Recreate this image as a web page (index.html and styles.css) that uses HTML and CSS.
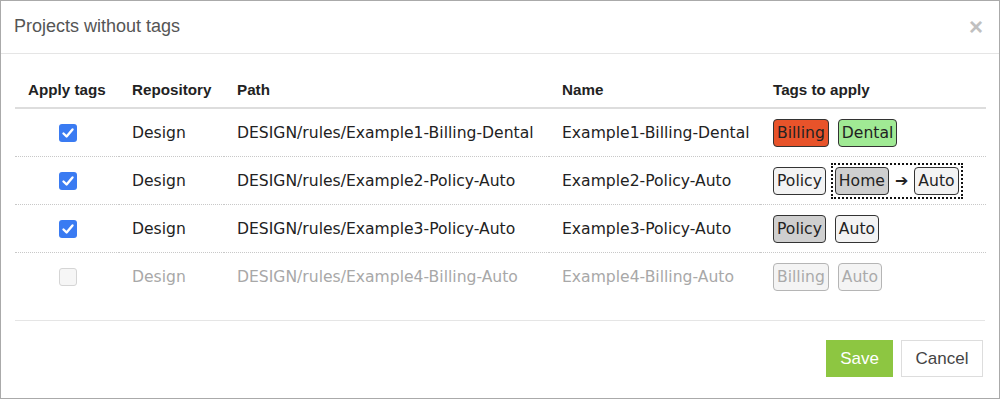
FILE: index.html
```html
<!DOCTYPE html>
<html>
<head>
<meta charset="utf-8">
<link rel="stylesheet" href="styles.css">
</head>
<body>
<div class="dialog">
  <div class="dlg-header">
    <span class="dlg-title">Projects without tags</span>
    <span class="dlg-close">×</span>
  </div>
  <div class="dlg-body">
    <table class="grid">
      <colgroup>
        <col class="c1"><col class="c2"><col class="c3"><col class="c4"><col class="c5">
      </colgroup>
      <thead>
        <tr><th>Apply tags</th><th>Repository</th><th>Path</th><th>Name</th><th>Tags to apply</th></tr>
      </thead>
      <tbody>
        <tr>
          <td class="cbcell"><span class="cb on"><svg viewBox="0 0 18 18" width="18" height="18"><path d="M4.5 9.5 L7.6 12.5 L13.5 5.5" fill="none" stroke="#fff" stroke-width="2.4" stroke-linecap="round" stroke-linejoin="round"/></svg></span></td>
          <td>Design</td>
          <td>DESIGN/rules/Example1-Billing-Dental</td>
          <td>Example1-Billing-Dental</td>
          <td><div class="tags"><span class="tag red">Billing</span><span class="tag green">Dental</span></div></td>
        </tr>
        <tr>
          <td class="cbcell"><span class="cb on"><svg viewBox="0 0 18 18" width="18" height="18"><path d="M4.5 9.5 L7.6 12.5 L13.5 5.5" fill="none" stroke="#fff" stroke-width="2.4" stroke-linecap="round" stroke-linejoin="round"/></svg></span></td>
          <td>Design</td>
          <td>DESIGN/rules/Example2-Policy-Auto</td>
          <td>Example2-Policy-Auto</td>
          <td><div class="tags"><span class="tag">Policy</span><span class="change"><span class="tag grey">Home</span><span class="arrow">➔</span><span class="tag">Auto</span></span></div></td>
        </tr>
        <tr>
          <td class="cbcell"><span class="cb on"><svg viewBox="0 0 18 18" width="18" height="18"><path d="M4.5 9.5 L7.6 12.5 L13.5 5.5" fill="none" stroke="#fff" stroke-width="2.4" stroke-linecap="round" stroke-linejoin="round"/></svg></span></td>
          <td>Design</td>
          <td>DESIGN/rules/Example3-Policy-Auto</td>
          <td>Example3-Policy-Auto</td>
          <td><div class="tags"><span class="tag grey">Policy</span><span class="tag">Auto</span></div></td>
        </tr>
        <tr class="disabled">
          <td class="cbcell"><span class="cb off"></span></td>
          <td>Design</td>
          <td>DESIGN/rules/Example4-Billing-Auto</td>
          <td>Example4-Billing-Auto</td>
          <td><div class="tags"><span class="tag">Billing</span><span class="tag">Auto</span></div></td>
        </tr>
      </tbody>
    </table>
  </div>
  <div class="dlg-footer">
    <button class="btn save">Save</button>
    <button class="btn cancel">Cancel</button>
  </div>
</div>
</body>
</html>
```

FILE: styles.css
```css
html, body {
  margin: 0;
  padding: 0;
  background: #fff;
}
.dialog {
  box-sizing: border-box;
  width: 1000px;
  height: 399px;
  border: 1px solid #aaa;
  display: flex;
  flex-direction: column;
  font-family: "Liberation Sans", Arial, sans-serif;
}
.dlg-header {
  height: 52px;
  border-bottom: 1px solid #e5e5e5;
  display: flex;
  align-items: center;
  justify-content: space-between;
  padding: 0 16px 0 13px;
}
.dlg-title {
  font-size: 18px;
  color: #555;
  padding-bottom: 1px;
}
.dlg-close {
  font-size: 24px;
  color: #c0c0c0;
  font-weight: bold;
  line-height: 1;
}
.dlg-body {
  padding: 17px 14px 0 14px;
  height: 249px;
}
.grid {
  width: 971px;
  border-collapse: collapse;
  table-layout: fixed;
}
.c1 { width: 104px; }
.c2 { width: 105px; }
.c3 { width: 325px; }
.c4 { width: 211px; }
.c5 { width: 226px; }
.grid th {
  text-align: left;
  font-family: "Liberation Sans", Arial, sans-serif;
  font-weight: bold;
  font-size: 15.2px;
  color: #222;
  height: 36px;
  padding: 0 0 0 13px;
  border-bottom: 2px solid #ddd;
  vertical-align: middle;
  white-space: nowrap;
}
.grid td {
  font-family: "DejaVu Sans", Verdana, sans-serif;
  font-size: 15.6px;
  color: #222;
  height: 47px;
  padding: 0 13px;
  border-bottom: 1px dotted #c8c8c8;
  vertical-align: middle;
  white-space: nowrap;
}
.grid tbody tr:last-child td {
  border-bottom: none;
}
.grid td.cbcell {
  text-align: center;
  padding: 0 0 0 1px;
}
.cb {
  display: inline-block;
  width: 18px;
  height: 18px;
  border-radius: 3px;
  box-sizing: border-box;
  vertical-align: middle;
}
.cb svg { display: block; }
.cb.on {
  background: #3a7bf2;
}
.cb.off {
  background: #f6f6f6;
  border: 1px solid #d5d5d5;
}
.tags {
  display: flex;
  align-items: center;
  gap: 9px;
}
.tag {
  display: inline-block;
  box-sizing: border-box;
  height: 28px;
  line-height: 26px;
  padding: 0 3px;
  border: 1px solid #333;
  border-radius: 4px;
  background: #f3f3f3;
  color: #222;
}
.tag.red { background: #e8532a; }
.tag.green { background: #a0ea94; }
.tag.grey { background: #cfcfcf; }
.change {
  display: inline-flex;
  align-items: center;
  gap: 4px;
  padding: 2px 2px;
  border: 2.5px dotted #111;
  margin-left: -4px;
}
.arrow {
  font-size: 16px;
  font-weight: bold;
  color: #222;
  margin: 0 2px;
}
.disabled td {
  color: #a8a8a8;
}
.disabled .tag {
  color: #aaa;
  border-color: #b5b5b5;
  background: #f4f4f4;
}
.dlg-footer {
  margin: 0 14px;
  border-top: 1px solid #e5e5e5;
  display: flex;
  justify-content: flex-end;
  gap: 8px;
  padding: 19px 2px 0 0;
}
.btn {
  height: 37px;
  font-family: "Liberation Sans", Arial, sans-serif;
  font-size: 17px;
  border-radius: 0;
  cursor: pointer;
}
.btn.save {
  width: 67px;
  background: #8dc641;
  color: #fff;
  border: none;
}
.btn.cancel {
  width: 82px;
  background: #fff;
  color: #444;
  border: 1px solid #ddd;
}
```
